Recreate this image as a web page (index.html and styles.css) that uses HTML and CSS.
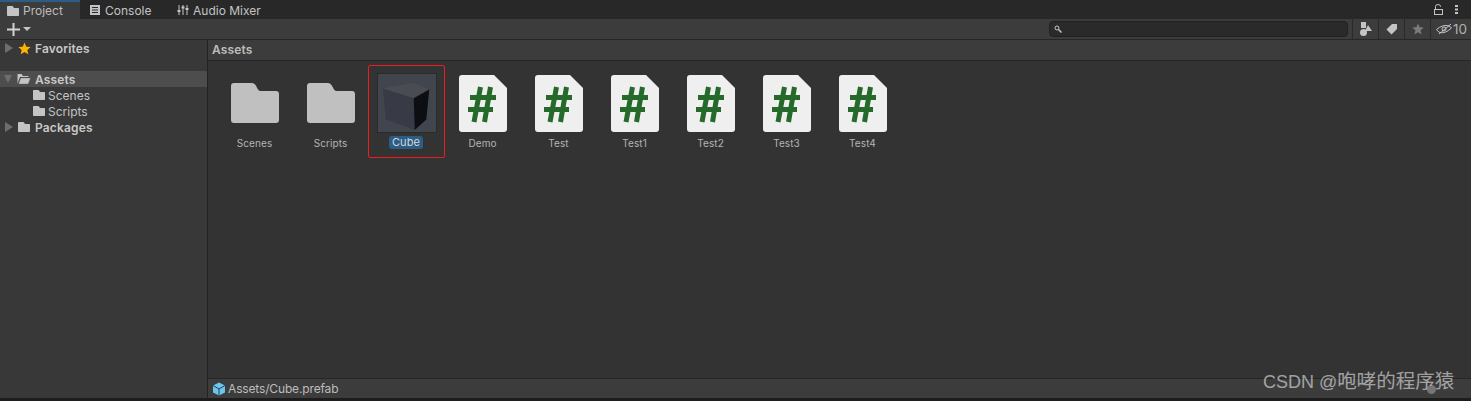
FILE: index.html
```html
<!DOCTYPE html>
<html lang="en">
<head>
    <meta charset="UTF-8">
    <title>Project</title>
    <link rel="stylesheet" href="styles.css">
</head>
<body>
    <svg class="defs" width="0" height="0">
        <symbol id="folder" viewBox="0 0 48 40">
            <path d="M3 0H21Q23 0 24.500 2L27 6.500Q28 8 30 8H45Q48 8 48 11V37Q48 40 45 40H3Q0 40 0 37V3Q0 0 3 0Z" fill="currentColor"/>
        </symbol>
        <symbol id="script" viewBox="0 0 48 57">
            <path d="M3 0H35L48 13V54Q48 57 45 57H3Q0 57 0 54V3Q0 0 3 0Z" fill="#efefef"/>
            <path d="M21.500 12L15 47M31.500 12L25.500 47M11 22.500H37M9 34.500H34" stroke="#25692b" stroke-width="5" fill="none"/>
        </symbol>
    </svg>

    <div class="window">
        <div class="tabs">
            <div class="tab tab-active">
                <svg class="tab-icon" viewBox="0 0 12 10"><use href="#folder"/></svg>
                Project
            </div>
            <div class="tab tab-console">
                <svg class="tab-icon-console" viewBox="0 0 10 10">
                    <path d="M0 0H10V10H0Z M2 2V3H8V2Z M2 4.500V5.500H8V4.500Z M2 7V8H8V7Z" fill="#c4c4c4" fill-rule="evenodd"/>
                </svg>
                Console
            </div>
            <div class="tab tab-mixer">
                <svg class="tab-icon" viewBox="0 0 12 12">
                    <path d="M2 1V11M6 1V11M10 1V11" stroke="#c4c4c4" stroke-width="1"/>
                    <path d="M0.500 7H3.500M4.500 3.500H7.500M8.500 5H11.500" stroke="#c4c4c4" stroke-width="2"/>
                </svg>
                Audio Mixer
            </div>
            <div class="tab-tools">
                <svg width="9" height="11" viewBox="0 0 9 11">
                    <path d="M1.500 5V2.500Q1.500 0.500 4 0.500Q6.500 0.500 6.500 2.500V3" stroke="#c4c4c4" fill="none"/>
                    <rect x="0.500" y="5.500" width="8" height="5" stroke="#c4c4c4" fill="none"/>
                </svg>
                <svg width="3" height="9" viewBox="0 0 3 9">
                    <path d="M0 0H3V2H0ZM0 3.500H3V5.500H0ZM0 7H3V9H0Z" fill="#c4c4c4"/>
                </svg>
            </div>
        </div>

        <div class="toolbar">
            <div class="add-btn">
                <svg width="13" height="13" viewBox="0 0 13 13">
                    <path d="M6.500 0V13M0 6.500H13" stroke="#d2d2d2" stroke-width="2"/>
                </svg>
                <span class="caret-down"></span>
            </div>
            <div class="search">
                <svg width="8" height="8" viewBox="0 0 8 8">
                    <circle cx="3" cy="3" r="2" stroke="#c4c4c4" fill="none"/>
                    <path d="M4.500 4.500L7.500 7.500" stroke="#c4c4c4" stroke-width="1.500"/>
                </svg>
            </div>
            <div class="tool-btn">
                <svg width="12" height="14" viewBox="0 0 12 14">
                    <rect x="1" y="0" width="5" height="6" fill="#c4c4c4"/>
                    <path d="M8 3L12 9H5Z" fill="#c4c4c4"/>
                    <circle cx="3.500" cy="10.500" r="3.500" fill="#c4c4c4"/>
                </svg>
            </div>
            <div class="tool-btn">
                <svg width="12" height="12" viewBox="0 0 12 12">
                    <path d="M6 1H11V6L5.500 11.500L0.500 6.500Z" fill="#c4c4c4"/>
                </svg>
            </div>
            <div class="tool-btn">
                <svg width="12" height="12" viewBox="0 0 12 12">
                    <path d="M6 0.500L7.600 4.300L11.700 4.600L8.600 7.300L9.500 11.400L6 9.200L2.500 11.400L3.400 7.300L0.300 4.600L4.400 4.300Z" fill="#7c7c7c"/>
                </svg>
            </div>
            <div class="tool-btn tool-btn-count">
                <svg width="16" height="12" viewBox="0 0 16 12">
                    <path d="M0.500 6.500Q7 1 13 3Q15 4 15.500 5Q9 11 4 9.500Q2 9 0.500 6.500Z" stroke="#c4c4c4" fill="none"/>
                    <circle cx="8" cy="6" r="2" stroke="#c4c4c4" fill="none"/>
                    <path d="M3 11L15 1" stroke="#c4c4c4"/>
                </svg>
                10
            </div>
        </div>

        <div class="panes">
            <div class="sidebar">
                <div class="tree-row tree-top">
                    <span class="caret-right"></span>
                    <svg class="tree-icon tree-star" viewBox="0 0 12 12">
                        <path d="M6 0.500L7.600 4.300L11.700 4.600L8.600 7.300L9.500 11.400L6 9.200L2.500 11.400L3.400 7.300L0.300 4.600L4.400 4.300Z" fill="#ffb400"/>
                    </svg>
                    <b>Favorites</b>
                </div>
                <div class="tree-row tree-selected">
                    <span class="caret-open"></span>
                    <svg class="tree-icon" viewBox="0 0 14 11">
                        <path d="M0.500 10V1Q0.500 0.500 1 0.500H4.500L6 2.500H11.500V3.500H3L0.500 10Z" fill="#c4c4c4"/>
                        <path d="M3.800 4.500H13.500L11.200 10.500H1.500Z" fill="#c4c4c4" stroke="#4d4d4d" stroke-width="0.300"/>
                    </svg>
                    <b>Assets</b>
                </div>
                <div class="tree-row tree-child">
                    <svg class="tree-icon-small" viewBox="0 0 48 40"><use href="#folder"/></svg>
                    Scenes
                </div>
                <div class="tree-row tree-child">
                    <svg class="tree-icon-small" viewBox="0 0 48 40"><use href="#folder"/></svg>
                    Scripts
                </div>
                <div class="tree-row">
                    <span class="caret-right"></span>
                    <svg class="tree-icon-small" viewBox="0 0 48 40"><use href="#folder"/></svg>
                    <b>Packages</b>
                </div>
            </div>

            <div class="main">
                <div class="breadcrumb">Assets</div>
                <div class="grid">
                    <div class="item">
                        <svg class="thumb-folder" viewBox="0 0 48 40"><use href="#folder"/></svg>
                        <span class="label">Scenes</span>
                    </div>
                    <div class="item">
                        <svg class="thumb-folder" viewBox="0 0 48 40"><use href="#folder"/></svg>
                        <span class="label">Scripts</span>
                    </div>
                    <div class="item item-picked">
                        <svg class="thumb-cube" viewBox="0 0 60 60">
                            <rect width="60" height="60" fill="#41454e"/>
                            <path d="M5 15L37 9L52 16L37 25Z" fill="#4a4c54"/>
                            <path d="M5 15L37 25L38 58L8 47Z" fill="#383b45"/>
                            <path d="M37 25L53 16L50 47L38 58Z" fill="#0d0e11"/>
                        </svg>
                        <span class="label label-picked">Cube</span>
                    </div>
                    <div class="item">
                        <svg class="thumb-script" viewBox="0 0 48 57"><use href="#script"/></svg>
                        <span class="label">Demo</span>
                    </div>
                    <div class="item">
                        <svg class="thumb-script" viewBox="0 0 48 57"><use href="#script"/></svg>
                        <span class="label">Test</span>
                    </div>
                    <div class="item">
                        <svg class="thumb-script" viewBox="0 0 48 57"><use href="#script"/></svg>
                        <span class="label">Test1</span>
                    </div>
                    <div class="item">
                        <svg class="thumb-script" viewBox="0 0 48 57"><use href="#script"/></svg>
                        <span class="label">Test2</span>
                    </div>
                    <div class="item">
                        <svg class="thumb-script" viewBox="0 0 48 57"><use href="#script"/></svg>
                        <span class="label">Test3</span>
                    </div>
                    <div class="item">
                        <svg class="thumb-script" viewBox="0 0 48 57"><use href="#script"/></svg>
                        <span class="label">Test4</span>
                    </div>
                </div>
                <div class="statusbar">
                    <svg width="14" height="14" viewBox="0 0 14 14">
                        <path d="M7 0.500L13 3.500V10.500L7 13.500L1 10.500V3.500Z" fill="#6cc5ef"/>
                        <path d="M1 3.500L7 7L13 3.500M7 7V13.500" stroke="#2f3c44" fill="none"/>
                    </svg>
                    Assets/Cube.prefab
                </div>
            </div>
        </div>
    </div>

    <div class="watermark">CSDN @<span class="watermark-name">咆哮的程序猿</span></div>
    <div class="watermark-dot"></div>
</body>
</html>
```

FILE: styles.css
```css
html, body {
    margin: 0;
    height: 100%;
    overflow: hidden;
}
body {
    background: #1d1d1d;
    color: #c4c4c4;
    font-family: Inter, "Noto Sans CJK SC", sans-serif;
    font-size: 12px;
}
.defs {
    display: block;
    height: 0;
}
.window {
    height: 398px;
    display: flex;
    flex-direction: column;
}

/* tabs */
.tabs {
    height: 19px;
    background: #282828;
    display: flex;
    flex-shrink: 0;
}
.tab {
    display: flex;
    align-items: center;
    gap: 4px;
    height: 19px;
    box-sizing: border-box;
    padding: 1px 0 0 7px;
    font-size: 12px;
    color: #c4c4c4;
}
.tab-console {
    width: 97px;
    padding-left: 10px;
    gap: 5px;
}
.tab-mixer {
    padding-left: 0;
}
.tab-active {
    width: 80px;
    background: #3c3c3c;
    border-top: 2px solid #2c5d87;
    padding-top: 0;
    color: #bdbdbd;
}
.tab-icon {
    width: 12px;
    height: 12px;
    color: #c4c4c4;
}
.tab-icon-console {
    width: 10px;
    height: 10px;
}
.tab-tools {
    margin-left: auto;
    display: flex;
    align-items: center;
    gap: 12px;
    padding-right: 13px;
}

/* toolbar */
.toolbar {
    height: 20px;
    background: #3c3c3c;
    border-bottom: 1px solid #262626;
    display: flex;
    align-items: center;
    flex-shrink: 0;
}
.add-btn {
    display: flex;
    align-items: center;
    gap: 3px;
    padding-left: 7px;
    margin-right: auto;
}
.caret-down {
    width: 0;
    height: 0;
    border-left: 4px solid transparent;
    border-right: 4px solid transparent;
    border-top: 4px solid #c4c4c4;
}
.search {
    width: 299px;
    height: 16px;
    box-sizing: border-box;
    background: #2a2a2a;
    border: 1px solid #212121;
    border-radius: 4px;
    display: flex;
    align-items: center;
    padding-left: 4px;
    margin-right: 4px;
}
.tool-btn {
    width: 25px;
    height: 20px;
    border-left: 1px solid #2a2a2a;
    display: flex;
    align-items: center;
    justify-content: center;
}
.tool-btn-count {
    width: 41px;
    gap: 1px;
    font-size: 13.500px;
    color: #b0b0b0;
    justify-content: flex-start;
    padding-left: 5px;
    box-sizing: border-box;
}

/* panes */
.panes {
    flex: 1;
    display: flex;
    min-height: 0;
}
.sidebar {
    width: 207px;
    flex-shrink: 0;
    background: #383838;
    border-right: 1px solid #232323;
}
.tree-row {
    height: 16px;
    display: flex;
    align-items: center;
    gap: 4px;
    color: #c4c4c4;
    padding-left: 5px;
}
.tree-row b {
    font-weight: 600;
    color: #c8c8c8;
    letter-spacing: 0.15px;
}
.tree-top {
    margin-bottom: 15px;
}
.tree-selected {
    background: #4d4d4d;
    padding-left: 4px;
}
.tree-child {
    padding-left: 32px;
    gap: 2px;
}
.caret-right {
    width: 0;
    height: 0;
    border-top: 5px solid transparent;
    border-bottom: 5px solid transparent;
    border-left: 8px solid #6e6e6e;
}
.caret-open {
    width: 0;
    height: 0;
    border-left: 4.500px solid transparent;
    border-right: 4.500px solid transparent;
    border-top: 8px solid #6e6e6e;
}
.tree-icon {
    width: 14px;
    height: 12px;
    margin-left: 1px;
}
.tree-star {
    width: 13px;
    height: 13px;
}
.tree-icon-small {
    width: 12px;
    height: 10px;
    color: #c4c4c4;
    margin: 0 1px;
}

/* main */
.main {
    flex: 1;
    display: flex;
    flex-direction: column;
    min-width: 0;
    background: #333333;
}
.breadcrumb {
    height: 21px;
    box-sizing: border-box;
    border-bottom: 1px solid #262626;
    background: #3c3c3c;
    font-weight: 600;
    padding: 2px 0 0 4px;
    letter-spacing: 0.15px;
    color: #bcbcbc;
}
.grid {
    flex: 1;
    display: grid;
    grid-template-columns: repeat(auto-fill, 76px);
    grid-auto-rows: 93px;
    padding: 4px 0 0 9px;
    align-content: start;
}
.item {
    width: 76px;
    height: 93px;
    box-sizing: border-box;
    display: flex;
    flex-direction: column;
    align-items: center;
    color: #c4c4c4;
}
.thumb-folder {
    width: 48px;
    height: 40px;
    margin: 18px 0 13px;
    color: #c0c0c0;
}
.thumb-script {
    width: 48px;
    height: 57px;
    margin: 10px 0 4px;
}
.thumb-cube {
    width: 60px;
    height: 60px;
    margin: 7px 0 3px 1px;
    border: 1px solid #2a2a2a;
    box-sizing: border-box;
}
.item-picked {
    width: 77px;
    margin-left: -1px;
    border: 1px solid #ee1c1c;
    border-radius: 2px;
}
.label {
    font-size: 10px;
    line-height: 14px;
    color: #b4b4b4;
    letter-spacing: 0.1px;
    margin-right: 1px;
}
.label-picked {
    background: #2c5d87;
    color: #d6d6d6;
    border-radius: 3px;
    font-size: 11px;
    padding: 0 3px;
    line-height: 13px;
}
.statusbar {
    height: 20px;
    box-sizing: border-box;
    background: #3c3c3c;
    border-top: 1px solid #262626;
    display: flex;
    align-items: center;
    gap: 2px;
    padding-left: 4px;
    color: #bdbdbd;
    letter-spacing: -0.15px;
}

/* watermark over the screenshot */
.watermark {
    position: absolute;
    left: 1263px;
    top: 370px;
    font-size: 18px;
    line-height: 22px;
    font-family: "Liberation Sans", "Noto Sans CJK SC", sans-serif;
    color: rgba(255, 255, 255, 0.55);
    white-space: nowrap;
}
.watermark-name {
    font-size: 19.500px;
}
.watermark-dot {
    position: absolute;
    left: 1427px;
    top: 385px;
    width: 9px;
    height: 9px;
    border-radius: 50%;
    background: rgba(255, 255, 255, 0.3);
}
```
